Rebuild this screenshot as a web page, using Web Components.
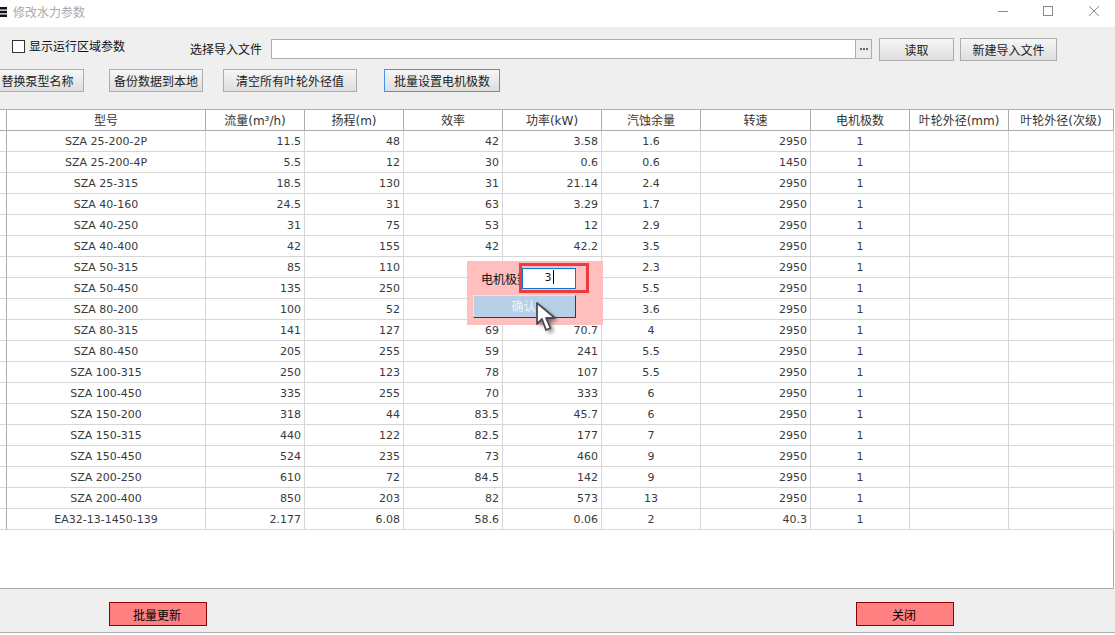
<!DOCTYPE html>
<html lang="zh"><head><meta charset="utf-8"><title>修改水力参数</title>
<style>
html,body{margin:0;padding:0;background:#fff}
body{width:1115px;height:635px;overflow:hidden;font:12px "DejaVu Sans","Noto Sans CJK SC",sans-serif}
</style></head><body>
<hydro-app></hydro-app>
<script>
const FONT='"DejaVu Sans","Noto Sans CJK SC",sans-serif';
const COLS='7px 199px 99px 99px 99px 99px 99px 110px 99px 99px 105px';
function def(name,css,html,init){
  customElements.define(name,class extends HTMLElement{
    constructor(){super();const r=this.attachShadow({mode:'open'});
      r.innerHTML='<style>'+css+'</style>'+html;}
    connectedCallback(){if(init&&!this._d){this._d=1;init.call(this,this.shadowRoot);}}
  });
}
def('title-bar',`:host{display:flex;align-items:center;height:27px;background:#fff;color:#aaa;font:12px "Noto Sans CJK SC",sans-serif}
.ham{width:7px;height:10px;margin-right:6px;margin-top:-3px}
.t{flex:1;margin-top:-5px}
.c{display:flex;margin-right:-2px;margin-top:-7px}
.c svg{display:block;width:46px;height:20px}`,
`<svg class="ham" viewBox="0 0 7 10"><path d="M0 0h7v2.500H0zM0 3.750h7v2.500H0zM0 7.500h7v2.500H0z" fill="#111"/></svg>
<span class="t"><slot></slot></span>
<span class="c">
<svg viewBox="0 0 46 20"><path d="M19 11.500h10" stroke="#8a8a8a" fill="none"/></svg>
<svg viewBox="0 0 46 20"><rect x="18.500" y="6.500" width="9" height="9" stroke="#8a8a8a" fill="none"/></svg>
<svg viewBox="0 0 46 20"><path d="M18 6l10 10M28 6L18 16" stroke="#8a8a8a" fill="none"/></svg>
</span>`);
def('win-button',`:host{display:inline-flex;box-sizing:border-box;align-items:center;justify-content:center;height:23px;border:1px solid #adadad;background:linear-gradient(#f6f6f6,#dedede);color:#222;font:12px "Noto Sans CJK SC",sans-serif;white-space:nowrap;flex:none}
:host([focused]){border-color:#3d97ee}
:host([danger]){background:#ff8080;border-color:#8b0000;color:#000;padding-right:2px}`,`<slot></slot>`);
def('tool-bar',`:host{display:block;box-sizing:border-box;height:82px;background:#efefef;color:#111;font:12px "Noto Sans CJK SC",sans-serif;padding-top:10px}
.r1,.r2{display:flex;align-items:center}
.r1{height:24px}
.chk{width:11px;height:11px;border:1px solid #333;background:#fff;margin:0 4px 0 12px;flex:none;position:relative;top:-3px}
.l1{width:161px;flex:none;position:relative;top:-4px}
.l2{width:81px;flex:none;position:relative;top:-1px}
.inp{box-sizing:border-box;width:585px;height:20px;border:1px solid #adadad;background:#fff;flex:none}
.dots{box-sizing:border-box;width:16px;height:20px;border:1px solid #adadad;border-left:0;background:#ececec;flex:none;display:flex;align-items:center;justify-content:center}
.r2{margin-top:8px;margin-left:-9px}`,
`<div class="r1"><span class="chk"></span><span class="l1">显示运行区域参数</span><span class="l2">选择导入文件</span><span class="inp"></span><span class="dots"><svg width="10" height="3" viewBox="0 0 10 3"><path d="M1 0h2v2H1zM4 0h2v2H4zM7 0h2v2H7z" fill="#666"/></svg></span>
<win-button style="width:75px;margin-left:7px">读取</win-button><win-button style="width:97px;margin-left:6px">新建导入文件</win-button></div>
<div class="r2"><win-button style="width:93px">替换泵型名称</win-button><win-button style="width:94px;margin-left:25px">备份数据到本地</win-button><win-button style="width:134px;margin-left:20px">清空所有叶轮外径值</win-button><win-button focused style="width:116px;margin-left:27px">批量设置电机极数</win-button></div>`);
def('grid-cell',`:host{display:block;box-sizing:border-box;height:100%;border-right:1px solid var(--line);border-bottom:1px solid var(--line);padding:0 3px;line-height:var(--lh);white-space:nowrap;overflow:hidden;text-align:center}
:host([num]){text-align:right}`,`<slot></slot>`);
def('grid-row',`:host{display:grid;grid-template-columns:${COLS};height:21px;box-sizing:border-box;color:#3a3a3a;--line:#d6d6d6;--lh:21px;font:11px ${FONT}}
:host([head]){--line:#adadad;--lh:22px;color:#333;font:12px ${FONT}}
.g{border-right:1px solid #adadad;border-bottom:1px solid var(--line);box-sizing:border-box}`,`<div class="g"></div><slot></slot>`);
def('data-grid',`:host{display:block;box-sizing:border-box;height:480px;background:#fff;border-top:1px solid #adadad;border-bottom:1px solid #adadad;margin-right:1px;border-right:1px solid #adadad}`,`<slot></slot>`,
function(){
  const D=`SZA 25-200-2P|11.5|48|42|3.58|1.6|2950
SZA 25-200-4P|5.5|12|30|0.6|0.6|1450
SZA 25-315|18.5|130|31|21.14|2.4|2950
SZA 40-160|24.5|31|63|3.29|1.7|2950
SZA 40-250|31|75|53|12|2.9|2950
SZA 40-400|42|155|42|42.2|3.5|2950
SZA 50-315|85|110|||2.3|2950
SZA 50-450|135|250|||5.5|2950
SZA 80-200|100|52|||3.6|2950
SZA 80-315|141|127|69|70.7|4|2950
SZA 80-450|205|255|59|241|5.5|2950
SZA 100-315|250|123|78|107|5.5|2950
SZA 100-450|335|255|70|333|6|2950
SZA 150-200|318|44|83.5|45.7|6|2950
SZA 150-315|440|122|82.5|177|7|2950
SZA 150-450|524|235|73|460|9|2950
SZA 200-250|610|72|84.5|142|9|2950
SZA 200-400|850|203|82|573|13|2950
EA32-13-1450-139|2.177|6.08|58.6|0.06|2|40.3`.split('\n');
  const H=['型号','流量(m³/h)','扬程(m)','效率','功率(kW)','汽蚀余量','转速','电机极数','叶轮外径(mm)','叶轮外径(次级)'];
  const mk=(vals,head)=>{const r=document.createElement('grid-row');if(head)r.setAttribute('head','');
    vals.forEach((v,i)=>{const c=document.createElement('grid-cell');c.textContent=v;
      if(!head&&[1,2,3,4,6].includes(i))c.setAttribute('num','');r.append(c);});this.append(r);};
  mk(H,true);
  D.forEach(l=>mk([...l.split('|'),'1','',''],false));
});
def('bottom-bar',`:host{display:flex;box-sizing:border-box;height:44px;background:#efefef;border-bottom:1px solid #adadad;padding:13px 0 0 109px;gap:649px;align-items:flex-start}`,`<slot></slot>`);
def('pole-popup',`:host{position:absolute;left:467px;top:261px;width:136px;height:64px;background:#ffbfbf;font:12px "Noto Sans CJK SC",sans-serif;color:#111}
.lab{position:absolute;left:14px;top:9px;width:54px;overflow:hidden;white-space:nowrap;line-height:18px}
.red{position:absolute;left:52px;top:2px;width:70px;height:30px;box-sizing:border-box;border:3px solid #f13a3a}
.inp{position:absolute;left:55px;top:7px;width:54px;height:21px;box-sizing:border-box;border:1px solid #0a78d7;background:#fff;font:11px ${FONT};text-align:center;line-height:18px;color:#222}
.inp i{display:inline-block;width:1px;height:14px;background:#000;vertical-align:-3px;margin-left:1px}
.btn{position:absolute;left:6px;top:34px;width:103px;height:23px;box-sizing:border-box;background:#b8cfe8;border:1px solid;border-color:#dbe7f3 #1f3f6b #1f3f6b #dbe7f3;color:#eef4fb;text-align:center;line-height:20px;padding-right:2px}
svg{position:absolute;left:68px;top:40px;overflow:visible}`,
`<span class="lab">电机极数</span><span class="red"></span><span class="inp">3<i></i></span><span class="btn">确认</span>
<svg width="24" height="32" viewBox="0 0 24 32"><defs><filter id="s" x="-40%" y="-40%" width="200%" height="200%"><feGaussianBlur stdDeviation="2"/></filter></defs>
<path d="M5 5V26L10 21 14 32 18.500 30 14 20H23Z" fill="#000" opacity=".55" filter="url(#s)"/>
<path d="M2 2V23L7 18 11 29 15.500 27 11 17H20Z" fill="#fff" stroke="#4a4a55" stroke-width="1.800" stroke-linejoin="round"/></svg>`);
def('hydro-app',`:host{display:block;position:relative;width:1115px;height:635px;overflow:hidden}`,
`<title-bar>修改水力参数</title-bar><tool-bar></tool-bar><data-grid></data-grid>
<bottom-bar><win-button danger style="width:98px;height:24px">批量更新</win-button><win-button danger style="width:98px;height:24px">关闭</win-button></bottom-bar>
<pole-popup></pole-popup>`);
</script>
</body></html>
